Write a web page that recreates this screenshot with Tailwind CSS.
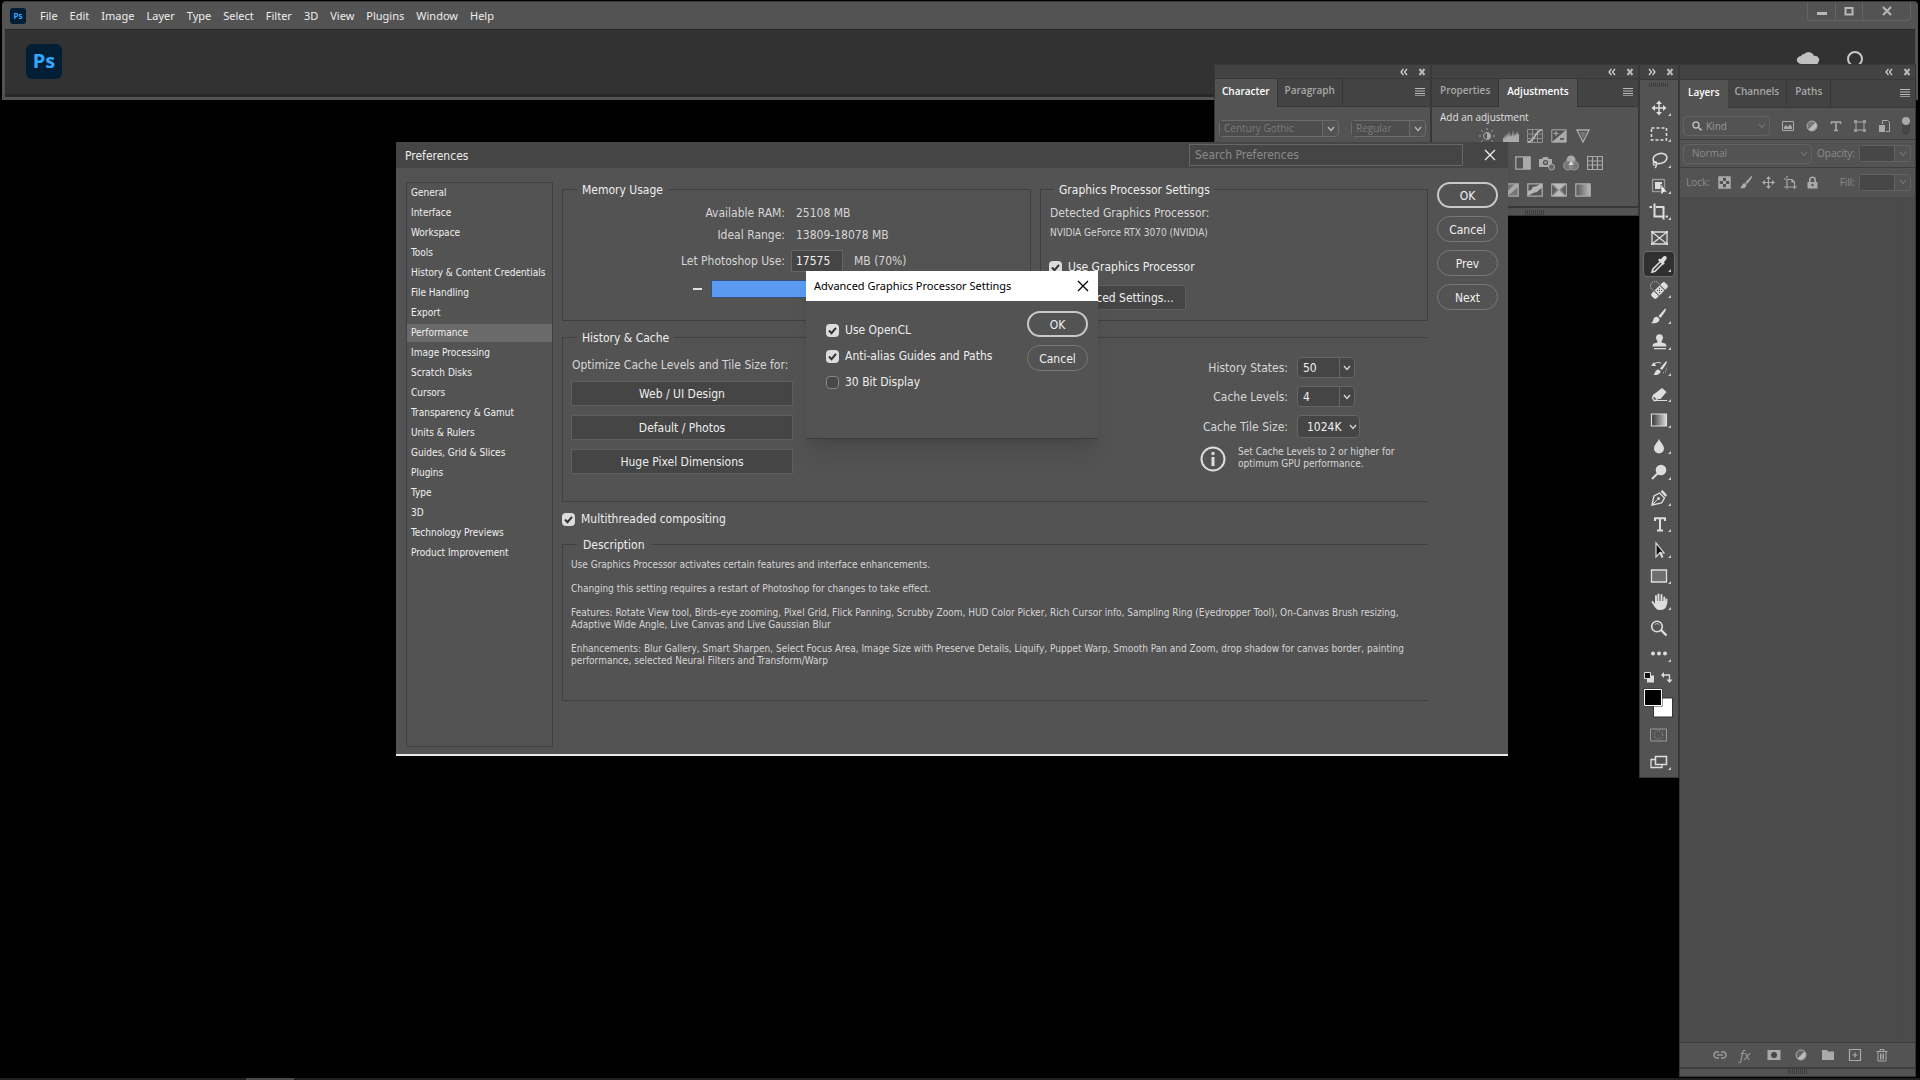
<!DOCTYPE html>
<html lang="en">
<head>
  <meta charset="UTF-8" />
  <meta name="viewport" content="width=device-width, initial-scale=1.0"/>
  <title>Photoshop - Preferences</title>
  <script src="https://cdn.jsdelivr.net/npm/@tailwindcss/browser@4"></script>
</head>

<body class="bg-black">
<div class="relative min-h-screen overflow-hidden bg-black font-['Open_Sans','Noto_Sans',sans-serif] text-[10px] text-[#dddddd]">

  <!-- Shared shapes -->
  <svg class="hidden">
    <symbol id="collapse" viewBox="0 0 8 8"><path d="M3.5 1 1 4l2.500 3M7 1 4.500 4 7 7" fill="none" stroke="#ccc" stroke-width="1.300"/></symbol>
    <symbol id="expand" viewBox="0 0 8 8"><path d="M1 1l2.500 3L1 7M4.500 1 7 4 4.500 7" fill="none" stroke="#ccc" stroke-width="1.300"/></symbol>
    <symbol id="close" viewBox="0 0 8 8"><path d="M1.500 1 6.500 7M6.500 1 1.500 7" fill="none" stroke="#b8b8b8" stroke-width="2"/></symbol>
    <symbol id="menu" viewBox="0 0 10 8"><path d="M0 .5h10M0 3h10M0 5.500h10M0 7.800h10" stroke="#bbb"/></symbol>
    <symbol id="caret" viewBox="0 0 8 6"><path d="M1 1l3 3.500L7 1" fill="none" stroke="currentColor" stroke-width="1.300"/></symbol>
    <symbol id="tick" viewBox="0 0 13 13"><path d="M3 6.500 5.500 9.200 10 3.800" fill="none" stroke="#333" stroke-width="2"/></symbol>
    <symbol id="x" viewBox="0 0 12 12"><path d="M1 1l10 10M11 1 1 11" fill="none" stroke="currentColor" stroke-width="1.300"/></symbol>
  </svg>

  <!-- Application window -->
  <header class="mx-[2px] mt-px rounded-t border-t border-[#3a3a3a] bg-[#535353] pb-[3px]">
    <div class="flex h-[27px] items-start justify-between">
      <nav class="flex h-7 items-center pl-2 font-['Noto_Sans','Open_Sans',sans-serif] text-[11px] text-[#eeeeee]">
        <div class="mr-[14px] flex size-4 items-center justify-center rounded-[3px] bg-[#001e36] text-[8px] font-bold text-[#31a8ff]">Ps</div>
        <div class="flex gap-3">
          <a href="#">File</a><a href="#">Edit</a><a href="#">Image</a><a href="#">Layer</a><a href="#">Type</a><a href="#">Select</a><a href="#">Filter</a><a href="#">3D</a><a href="#">View</a><a href="#">Plugins</a><a href="#">Window</a><a href="#">Help</a>
        </div>
      </nav>
      <div class="mr-[7px] flex h-[19px] rounded-b-sm border border-t-0 border-[#646464]">
        <button aria-label="Minimize" class="flex w-7 items-center justify-center border-r border-[#646464]"><svg class="size-3" viewBox="0 0 12 12"><path d="M1 7h10v3H1z" fill="#b8b8b8"/></svg></button>
        <button aria-label="Maximize" class="flex w-[27px] items-center justify-center border-r border-[#646464]"><svg class="size-3" viewBox="0 0 12 12"><path d="M2.500 3h7v6.500h-7z" fill="none" stroke="#b8b8b8" stroke-width="2"/></svg></button>
        <button aria-label="Close window" class="flex w-[47px] items-center justify-center"><svg class="size-3" viewBox="0 0 12 12"><path d="M2 2l8 8M10 2l-8 8" stroke="#b8b8b8" stroke-width="2"/></svg></button>
      </div>
    </div>
    <div class="mx-[3px] flex h-[68px] items-start justify-between border-t border-b-3 border-[#272727] bg-[#323232] pt-[14px] pl-[21px]">
      <div class="flex h-[35px] w-9 items-center justify-center rounded-[6px] bg-[#001e36] pb-[2px] text-[20px] font-bold text-[#31a8ff]">Ps</div>
      <div class="mr-[51px] flex gap-[26px] pt-[6px]">
        <svg class="h-4 w-6" viewBox="0 0 24 16"><path d="M5 14a4.500 4.500 0 0 1-4-3 4 4 0 0 1 4-5 4 4 0 0 1 3-2 6 6 0 0 1 10 2 4 4 0 0 1 4.500 6l-1 2z" fill="#c0c0c0"/></svg>
        <svg class="size-[18px]" viewBox="0 0 18 18"><circle cx="9" cy="9" r="7" fill="none" stroke="#c8c8c8" stroke-width="2"/></svg>
      </div>
    </div>
  </header>

  <!-- Character / Paragraph panel -->
  <section class="absolute top-[64px] right-[489px] h-[150px] w-[217px] border border-[#383838] bg-[#535353]">
    <div class="flex h-[14px] items-center justify-end gap-[10px] border-b border-[#383838] bg-[#434343] pr-1">
      <svg class="size-2"><use href="#collapse"/></svg><svg class="size-2"><use href="#close"/></svg>
    </div>
    <div class="flex h-7 items-stretch bg-[#434343] font-semibold">
      <button class="bg-[#535353] px-[7px] pb-1 text-white">Character</button>
      <button class="border-x border-b border-[#383838] px-[7px] pb-1 text-[#a8a8a8]">Paragraph</button>
      <div class="flex flex-1 items-center justify-end border-b border-[#383838] pr-[5px] pb-[2px]"><svg class="h-2 w-[10px]"><use href="#menu"/></svg></div>
    </div>
    <div class="flex gap-3 px-1 pt-[13px] text-[#7c7c7c]">
      <div class="flex h-[17px] w-[120px] rounded-sm border border-[#6b6b6b]">
        <input aria-label="Font family" value="Century Gothic" class="w-0 flex-1 bg-[#4d4d4d] pl-1 outline-none"/>
        <button aria-label="Font list" class="flex w-4 items-center justify-center border-l border-[#6b6b6b] text-[#b8b8b8]"><svg class="h-[6px] w-2"><use href="#caret"/></svg></button>
      </div>
      <div class="flex h-[17px] w-[75px] rounded-sm border border-[#6b6b6b]">
        <input aria-label="Font style" value="Regular" class="w-0 flex-1 bg-[#4d4d4d] pl-1 outline-none"/>
        <button aria-label="Style list" class="flex w-4 items-center justify-center border-l border-[#6b6b6b] text-[#b8b8b8]"><svg class="h-[6px] w-2"><use href="#caret"/></svg></button>
      </div>
    </div>
  </section>

  <!-- Properties / Adjustments panel -->
  <section class="absolute top-[64px] right-[281px] w-[208px] border border-[#383838] bg-[#535353]">
    <div class="flex h-[14px] items-center justify-end gap-[10px] border-b border-[#383838] bg-[#434343] pr-1">
      <svg class="size-2"><use href="#collapse"/></svg><svg class="size-2"><use href="#close"/></svg>
    </div>
    <div class="flex h-7 items-stretch bg-[#434343] font-semibold">
      <button class="border-r border-b border-[#383838] px-2 pb-1 text-[#a8a8a8]">Properties</button>
      <button class="border-r border-[#383838] bg-[#535353] px-2 pb-1 text-white">Adjustments</button>
      <div class="flex flex-1 items-center justify-end border-b border-[#383838] pr-[5px] pb-[2px]"><svg class="h-2 w-[10px]"><use href="#menu"/></svg></div>
    </div>
    <div class="px-2 pt-[3px]">
      <p class="leading-[14px] text-[#e0e0e0]">Add an adjustment</p>
      <div class="flex flex-col gap-[11px] pt-[4px]">
        <div class="flex gap-2 pl-[39px]">
          <svg class="size-4" viewBox="0 0 16 16"><circle cx="8" cy="8" r="3.500" fill="none" stroke="#aaa"/><path d="M8 4.500a3.500 3.500 0 0 1 0 7z" fill="#aaa"/><path d="M8 0v2M8 14v2M0 8h2M14 8h2M2.300 2.300l1.500 1.500M12.200 12.200l1.500 1.500M13.700 2.300l-1.500 1.500M2.300 13.700l1.500-1.500" stroke="#aaa"/></svg>
          <svg class="size-4" viewBox="0 0 16 16"><path d="M0 14V9l1 2 1-4 1 3 1-5 1 4 1-6 1 6 1-3 1 3 1-7 1 7 1-4 1 3 1-5 1 4 1-2v9z" fill="#aaa"/></svg>
          <svg class="size-4" viewBox="0 0 16 16"><path d="M.5 1.500h15v13H.5zM5.500 1v14M10.500 1v14M0 6h16M0 10.500h16" fill="none" stroke="#8e8e8e"/><path d="M1 14c7 0 7-12 14-12" fill="none" stroke="#bbb" stroke-width="1.500"/></svg>
          <svg class="size-4" viewBox="0 0 16 16"><path d="M.8 1.800h14.400v12.400H.8z" fill="none" stroke="#aaa"/><path d="M15 2v12H1z" fill="#aaa"/><path d="M5 3v5M2.500 5.500h5" stroke="#aaa"/><path d="M9 11h4" stroke="#444" stroke-width="1.500"/></svg>
          <svg class="size-4" viewBox="0 0 16 16"><path d="M2 2h12L8 14z" fill="none" stroke="#aaa" stroke-width="1.400"/><path d="M5 4h6l-3 7z" fill="#777"/></svg>
        </div>
        <div class="flex gap-2 pl-[75px]">
          <svg class="size-4" viewBox="0 0 16 16"><path d="M.8 1.800h14.400v12.400H.8z" fill="none" stroke="#aaa" stroke-width="1.300"/><path d="M8 2h7v12H8z" fill="#aaa"/></svg>
          <svg class="size-4" viewBox="0 0 16 16"><path d="M0 4h3l1.500-2h4L10 4h3v8H0z" fill="#aaa"/><circle cx="6.500" cy="7.500" r="2.600" fill="#535353"/><circle cx="6.500" cy="7.500" r="1.200" fill="#aaa"/><circle cx="12.500" cy="12" r="3" fill="#666" stroke="#aaa"/></svg>
          <svg class="size-4" viewBox="0 0 16 16"><circle cx="8" cy="5" r="4.500" fill="#aaa"/><circle cx="5" cy="10.500" r="4.500" fill="#777" stroke="#999"/><circle cx="11" cy="10.500" r="4.500" fill="#8c8c8c" fill-opacity=".7" stroke="#999"/><path d="M8 6l2.500 4h-5z" fill="#ddd"/></svg>
          <svg class="size-4" viewBox="0 0 16 16"><path d="M.5 1.500h15v13H.5zM5.500 1v14M10.500 1v14M0 6h16M0 10h16" fill="none" stroke="#aaa" stroke-width="1.200"/></svg>
        </div>
        <div class="flex gap-2 pl-[63px]">
          <svg class="size-4" viewBox="0 0 16 16"><path d="M.8 1.800h14.400v12.400H.8z" fill="#777" stroke="#aaa" stroke-width="1.300"/><path d="M2 11 12 2h3v3L5 14H2z" fill="#aaa"/></svg>
          <svg class="size-4" viewBox="0 0 16 16"><path d="M.8 1.800h14.400v12.400H.8z" fill="#555" stroke="#aaa" stroke-width="1.300"/><path d="M1 9l3-1 2-3 4-1 3-2h2v4l-3 2-2 2-4 1-3 2H1z" fill="#b5b5b5"/></svg>
          <svg class="size-4" viewBox="0 0 16 16"><path d="M.8 1.800h14.400v12.400H.8z" fill="#888" stroke="#aaa" stroke-width="1.300"/><path d="M2 2h12L8 8zM2 14h12L8 8z" fill="#bbb"/><path d="M1 3v10l5-5zM15 3v10l-5-5z" fill="#606060"/></svg>
          <svg class="size-4" viewBox="0 0 16 16"><defs><linearGradient id="g1"><stop stop-color="#555"/><stop offset="1" stop-color="#bbb"/></linearGradient></defs><path d="M.8 1.800h14.400v12.400H.8z" fill="url(#g1)" stroke="#aaa" stroke-width="1.300"/></svg>
        </div>
      </div>
    </div>
    <div class="mt-2 flex h-[9px] items-end justify-center border-t-2 border-[#383838]"><div class="h-[5px] w-5 bg-[repeating-linear-gradient(90deg,#3d3d3d_0_1px,transparent_1px_2px)]"></div></div>
  </section>

  <!-- Tools -->
  <aside class="absolute top-[64px] right-[241px] w-[40px] border border-[#383838] bg-[#535353] pb-[2px]">
    <div class="flex h-[15px] items-center justify-end gap-[10px] border-b border-[#383838] bg-[#434343] pr-1">
      <svg class="size-2"><use href="#expand"/></svg><svg class="size-2"><use href="#close"/></svg>
    </div>
    <div class="mx-auto mt-[3px] mb-2 h-1 w-5 bg-[repeating-linear-gradient(90deg,#3d3d3d_0_1px,transparent_1px_2px)]"></div>
    <div class="flex flex-col pl-[3px] text-[#dddddd]">
      <button aria-label="Move"><svg class="h-[26px] w-8" viewBox="0 0 32 26"><path d="M16 7v12M10 13h12" stroke="currentColor" stroke-width="1.500"/><path d="M16 5.500l3 3.500h-6zM16 20.500l3-3.500h-6zM8.500 13l3.500-3v6zM23.500 13l-3.500-3v6z" fill="currentColor"/><path d="M28 18v3h-3z" fill="#ccc"/></svg></button>
      <button aria-label="Marquee"><svg class="h-[26px] w-8" viewBox="0 0 32 26"><path d="M8.500 7h15v12h-15z" fill="none" stroke="currentColor" stroke-width="1.500" stroke-dasharray="3 2"/><path d="M28 18v3h-3z" fill="#ccc"/></svg></button>
      <button aria-label="Lasso"><svg class="h-[26px] w-8" viewBox="0 0 32 26"><ellipse cx="17" cy="11.500" rx="7" ry="5" transform="rotate(-15 17 11.500)" fill="none" stroke="currentColor" stroke-width="1.600"/><circle cx="12" cy="16.500" r="1.800" fill="none" stroke="currentColor" stroke-width="1.200"/><path d="M13 18c1 1 0 2-1 3" fill="none" stroke="currentColor" stroke-width="1.200"/><path d="M28 18v3h-3z" fill="#ccc"/></svg></button>
      <button aria-label="Object selection"><svg class="h-[26px] w-8" viewBox="0 0 32 26"><path d="M9.500 6.500h12v12h-12z" fill="none" stroke="currentColor" stroke-width="1.300" stroke-dasharray="1 1"/><path d="M12 9h7v7h-7z" fill="currentColor"/><path d="M18 11v11l3-3 3.500.5z" fill="#eee" stroke="#535353" stroke-width=".7"/><path d="M28 18v3h-3z" fill="#ccc"/></svg></button>
      <button aria-label="Crop"><svg class="h-[26px] w-8" viewBox="0 0 32 26"><path d="M11.500 4.500v13h8M6.500 8h2.500M13 8h7.500v12.500M22.500 17.500h2.500" fill="none" stroke="currentColor" stroke-width="2"/><path d="M28 18v3h-3z" fill="#ccc"/></svg></button>
      <button aria-label="Frame"><svg class="h-[26px] w-8" viewBox="0 0 32 26"><path d="M9 7h15v12H9zM9 7l15 12M24 7 9 19" fill="none" stroke="currentColor" stroke-width="1.300"/><path d="M8 6h2v2H8zM23 6h2v2h-2zM8 18h2v2H8zM23 18h2v2h-2z" fill="currentColor"/></svg></button>
      <button aria-label="Eyedropper" class="mr-[3px] rounded-sm border border-[#6b6b6b] bg-[#303030]"><svg class="h-6 w-[30px]" viewBox="1 1 30 24"><path d="M17.500 10.500 10 18l-1 3 3-.8 7.500-7.500" fill="none" stroke="currentColor" stroke-width="1.600"/><path d="M15 9l1.500-1.500 1.500.7 2-2.500c2.500-2 5 .3 3 3L21 11l.7 1.500L20 14z" fill="currentColor"/><path d="M28 18v3h-3z" fill="#ccc"/></svg></button>
      <button aria-label="Healing brush"><svg class="h-[26px] w-8" viewBox="0 0 32 26"><circle cx="12" cy="9" r="4.500" fill="none" stroke="currentColor" stroke-dasharray="1 1.200"/><g transform="rotate(-45 16.500 13.500)"><rect x="7" y="10" width="19" height="7" rx="2" fill="currentColor"/><path d="M12.500 9v9M20.500 9v9" stroke="#535353"/><path d="M14.500 12h1.200M17.500 12h1.200M14.500 15h1.200M17.500 15h1.200M16 13.500h1.200" stroke="#444"/></g><path d="M28 18v3h-3z" fill="#ccc"/></svg></button>
      <button aria-label="Brush"><svg class="h-[26px] w-8" viewBox="0 0 32 26"><path d="M22.500 5.500c1 .7.300 2-1 4l-4 5.500-2-2 4.500-5c1.200-1.500 2-2.700 2.500-2.500z" fill="currentColor"/><path d="M14.500 14l2 2c0 3-3 5-8.500 4 2-1 2-2.500 2.500-4 .7-1.800 2.300-2.500 4-2z" fill="currentColor"/><path d="M28 18v3h-3z" fill="#ccc"/></svg></button>
      <button aria-label="Clone stamp"><svg class="h-[26px] w-8" viewBox="0 0 32 26"><path d="M14.500 13.500c.5-2-1.500-2.500-1.500-4.700a3.500 3.500 0 0 1 7 0c0 2.200-2 2.700-1.500 4.700 3 .5 5 1 5 4H9.500c0-3 2-3.500 5-4zM11 19h12v1.300H11z" fill="currentColor"/><path d="M28 18v3h-3z" fill="#ccc"/></svg></button>
      <button aria-label="History brush"><svg class="h-[26px] w-8" viewBox="0 0 32 26"><path d="M23.500 6c1 .7 0 2-1 4L19 15l-2-1.500 4-5zM15.500 14.500l2 1.500c0 3-3 4.500-7 4 1.500-1 1.500-5.500 5-5.500z" fill="currentColor"/><path d="M8 11l3-4 2 4z" fill="currentColor"/><path d="M12 8.500c2-1.500 5-1.500 6 0" stroke="currentColor" fill="none"/><path d="M20 18l3-2 .5-4" fill="none" stroke="currentColor" stroke-dasharray="1 1.500"/><path d="M28 18v3h-3z" fill="#ccc"/></svg></button>
      <button aria-label="Eraser"><svg class="h-[26px] w-8" viewBox="0 0 32 26"><path d="M19 7l4.500 4-6 7h-3L10 14z" fill="currentColor"/><path d="M10.500 14.500l3.700 3.500-1.200 1.500h-2L9.500 17z" fill="#535353" stroke="currentColor" stroke-width="1.300"/><path d="M11 19.500h13" stroke="currentColor"/><path d="M28 18v3h-3z" fill="#ccc"/></svg></button>
      <button aria-label="Gradient"><svg class="h-[26px] w-8" viewBox="0 0 32 26"><defs><linearGradient id="g2"><stop stop-color="#333"/><stop offset="1" stop-color="#ddd"/></linearGradient></defs><path d="M8.500 7h15v12h-15z" fill="url(#g2)" stroke="currentColor" stroke-width="1.200"/><path d="M28 18v3h-3z" fill="#ccc"/></svg></button>
      <button aria-label="Blur"><svg class="h-[26px] w-8" viewBox="0 0 32 26"><path d="M16 5.500c1 4 5 6 5 10a5 5 0 0 1-10 0c0-4 4-6 5-10z" fill="currentColor"/><path d="M28 18v3h-3z" fill="#ccc"/></svg></button>
      <button aria-label="Dodge"><svg class="h-[26px] w-8" viewBox="0 0 32 26"><circle cx="18" cy="11" r="5.300" fill="currentColor"/><path d="M15 14l-6 6" stroke="currentColor" stroke-width="2"/><path d="M28 18v3h-3z" fill="#ccc"/></svg></button>
      <button aria-label="Pen"><svg class="h-[26px] w-8" viewBox="0 0 32 26"><path d="M9 20l2-9 5.500-3 5 5-3 5z" fill="none" stroke="currentColor" stroke-width="1.400"/><path d="M17.500 6.500l2-1.500 4.500 5-1.500 2z" fill="currentColor"/><path d="M9 20l5.500-5.500" stroke="currentColor"/><circle cx="15.500" cy="13.500" r="1.500" fill="currentColor"/><path d="M28 18v3h-3z" fill="#ccc"/></svg></button>
      <button aria-label="Type"><svg class="h-[26px] w-8" viewBox="0 0 32 26"><path d="M12 10V7.300h10V10M17 7v12.500M14 19.500h6" fill="none" stroke="currentColor" stroke-width="2"/><path d="M28 18v3h-3z" fill="#ccc"/></svg></button>
      <button aria-label="Path selection"><svg class="h-[26px] w-8" viewBox="0 0 32 26"><path d="M13 6v14l3.500-4H21z" fill="#111" stroke="currentColor" stroke-width="1.200"/><path d="M17 15l2.500 5.500" stroke="currentColor" stroke-width="2"/><path d="M28 18v3h-3z" fill="#ccc"/></svg></button>
      <button aria-label="Rectangle"><svg class="h-[26px] w-8" viewBox="0 0 32 26"><path d="M8.500 7h15v12h-15z" fill="#6e6e6e" stroke="currentColor" stroke-width="1.300"/><path d="M28 18v3h-3z" fill="#ccc"/></svg></button>
      <button aria-label="Hand"><svg class="h-[26px] w-8" viewBox="0 0 32 26"><path d="M13 13V7M15.500 12V5.500M18.500 12V6M21.300 14V8.500M23.300 14.500l.2-4M9.500 13l3 4" stroke="currentColor" stroke-width="1.900" stroke-linecap="round"/><path d="M12 12h10.500l1.500 1c0 5-2 8-6.500 8-4 0-5-2-7-5l1.500-.5z" fill="currentColor"/><path d="M28 18v3h-3z" fill="#ccc"/></svg></button>
      <button aria-label="Zoom"><svg class="h-[26px] w-8" viewBox="0 0 32 26"><circle cx="14" cy="11.500" r="5.300" fill="none" stroke="currentColor" stroke-width="1.600"/><path d="M12 9.500c1.500-1.300 3.500-1 4.500.5" fill="none" stroke="#bbb"/><path d="M18 15l5.500 5.500" stroke="currentColor" stroke-width="2.400"/></svg></button>
      <button aria-label="Edit toolbar"><svg class="h-[26px] w-8" viewBox="0 0 32 26"><circle cx="10" cy="12.500" r="2" fill="currentColor"/><circle cx="16" cy="12.500" r="2" fill="currentColor"/><circle cx="22" cy="12.500" r="2" fill="currentColor"/><path d="M28 18v3h-3z" fill="#ccc"/></svg></button>
      <svg class="h-[52px] w-8" viewBox="0 0 32 52"><path d="M4 8.500h7v7H4z" fill="#ddd"/><path d="M1.500 5.500h6v6h-6z" fill="#111" stroke="#ddd"/><path d="M19 8h7.500v6" fill="none" stroke="#ddd" stroke-width="1.300"/><path d="M21 5v6l-3-3zM23.500 12.500h6l-3 3.500z" fill="#ddd"/><path d="M10.500 31h19v19h-19z" fill="#fff" stroke="#333"/><path d="M.5 21.500h19v18H.5z" fill="#333"/><path d="M1.500 22.500h17v16h-17z" fill="#000" stroke="#fff"/></svg>
      <button aria-label="Quick mask"><svg class="h-[30px] w-8" viewBox="0 0 32 30"><path d="M7.500 10h16v12h-16z" fill="none" stroke="#999"/><circle cx="15.500" cy="16" r="4.200" fill="none" stroke="#999" stroke-dasharray="1 1.200"/></svg></button>
      <button aria-label="Screen mode"><svg class="h-[26px] w-8" viewBox="0 0 32 26"><path d="M8 10.500h11v8H8z" fill="none" stroke="currentColor" stroke-width="1.300"/><path d="M12.500 7.500h11v8h-11z" fill="#535353" stroke="currentColor" stroke-width="1.500"/><path d="M28 18v3h-3z" fill="#ccc"/></svg></button>
    </div>
  </aside>

  <!-- Layers panel -->
  <aside class="absolute top-[64px] right-[4px] bottom-[3px] flex w-[237px] flex-col border border-[#383838] bg-[#535353]">
    <div class="flex h-[15px] shrink-0 items-center justify-end gap-[10px] border-b border-[#383838] bg-[#434343] pr-1">
      <svg class="size-2"><use href="#collapse"/></svg><svg class="size-2"><use href="#close"/></svg>
    </div>
    <div class="flex h-7 shrink-0 items-stretch bg-[#434343] font-semibold">
      <button class="bg-[#535353] px-2 pb-1 text-white">Layers</button>
      <button class="border-r border-b border-[#383838] px-[7px] pb-1 text-[#a8a8a8]">Channels</button>
      <button class="border-r border-b border-[#383838] px-2 pb-1 text-[#a8a8a8]">Paths</button>
      <div class="flex flex-1 items-center justify-end border-b border-[#383838] pr-[5px] pb-[2px]"><svg class="h-2 w-[10px]"><use href="#menu"/></svg></div>
    </div>
    <div class="flex h-8 shrink-0 items-start border-b border-[#3e3e3e] pt-2 pl-[3px]">
      <div class="relative flex h-5 w-[87px] items-center rounded-sm border border-[#626262]">
        <svg class="absolute left-2 size-[10px]" viewBox="0 0 10 10"><circle cx="4" cy="4" r="3" fill="none" stroke="#bbb" stroke-width="1.400"/><path d="M6 6l3.500 3.500" stroke="#bbb" stroke-width="1.600"/></svg>
        <select aria-label="Filter type" class="h-full w-full appearance-none pl-[22px] text-[#999999]"><option>Kind</option></select>
        <svg class="absolute right-[3px] h-[6px] w-2 text-[#6e6e6e]"><use href="#caret"/></svg>
      </div>
      <div class="ml-3 flex h-5 items-center gap-3">
        <svg class="size-3" viewBox="0 0 12 12"><path d="M.5 1.500h11v9H.5z" fill="none" stroke="#aaa"/><path d="M2 9V7l2-2 1.500 2L8 4.500 10 7v2z" fill="#aaa"/></svg>
        <svg class="size-3" viewBox="0 0 12 12"><circle cx="6" cy="6" r="5" fill="#777" stroke="#aaa"/><path d="M9.500 2.500a5 5 0 0 1-7 7z" fill="#bbb"/></svg>
        <svg class="size-3" viewBox="0 0 12 12"><path d="M1.500 4V2h9v2M6 2v9M4 10.500h4" fill="none" stroke="#aaa" stroke-width="1.600"/></svg>
        <svg class="size-3" viewBox="0 0 12 12"><path d="M2 2h8v8H2z" fill="none" stroke="#aaa"/><path d="M0 0h3v3H0zM9 0h3v3H9zM0 9h3v3H0zM9 9h3v3H9z" fill="#999"/></svg>
        <svg class="size-3" viewBox="0 0 12 12"><path d="M4.500 4V.5h5l2 2v9H8" fill="none" stroke="#aaa"/><path d="M1 5h6v7H1z" fill="#aaa"/></svg>
        <svg class="h-[18px] w-2" viewBox="0 0 8 18"><rect width="8" height="18" rx="4" fill="#464646"/><circle cx="4" cy="4" r="4" fill="#aaa"/></svg>
      </div>
    </div>
    <div class="flex h-7 shrink-0 items-center border-b border-[#3e3e3e] pl-[3px] text-[#8c8c8c]">
      <div class="relative flex h-5 w-[129px] items-center rounded-sm border border-[#626262]">
        <select aria-label="Blend mode" class="h-full w-full appearance-none pl-2"><option>Normal</option></select>
        <svg class="absolute right-[3px] h-[6px] w-2 text-[#6e6e6e]"><use href="#caret"/></svg>
      </div>
      <label for="opacity" class="ml-auto">Opacity:</label>
      <div class="mr-1 ml-1 flex h-[17px] w-[52px] rounded-sm border border-[#626262]">
        <input id="opacity" class="w-0 flex-1 bg-[#474747]"/>
        <button aria-label="Opacity slider" class="flex w-4 items-center justify-center border-l border-[#626262] text-[#6e6e6e]"><svg class="h-[6px] w-2"><use href="#caret"/></svg></button>
      </div>
    </div>
    <div class="flex h-[30px] shrink-0 items-center border-b border-[#4a4a4a] pb-px pl-[6px] text-[#8c8c8c]">
      <span>Lock:</span>
      <div class="ml-[8px] flex items-center gap-[9px]">
        <svg class="size-[13px]" viewBox="0 0 13 13"><path d="M1 1h11v11H1z" fill="none" stroke="#aaa" stroke-width="1.500"/><path d="M1 1h4v4H1zM8 1h4v4H8zM5 5h3v3H5zM1 8h4v4H1zM8 8h4v4H8z" fill="#aaa"/></svg>
        <svg class="size-[13px]" viewBox="0 0 13 13"><path d="M12 0c1 1-3 6-5 8L5.500 6.500C8 4 11-.5 12 0zM5 7l1.500 1.500C6.500 12 3 13 0 12c2-1 2-5 5-5z" fill="#aaa"/></svg>
        <svg class="size-[13px]" viewBox="0 0 13 13"><path d="M6.500 1v11M1 6.500h11" stroke="#aaa" stroke-width="1.200"/><path d="M6.500 0 9 3H4zM6.500 13 9 10H4zM0 6.500 3 4v5zM13 6.500 10 4v5z" fill="#aaa"/></svg>
        <svg class="size-[13px]" viewBox="0 0 13 13"><path d="M3 0v2M0 3h2M3 3.500h5l2.500 2.500V11H3zM8 3.500V6h2.500M10.500 11v2M11 11h2M0 11h2M3 11v2" fill="none" stroke="#aaa" stroke-width="1.200"/></svg>
        <svg class="size-[13px]" viewBox="0 0 13 13"><path d="M1.500 6h10v6.500h-10z" fill="#aaa"/><path d="M3.800 6V4a2.700 2.700 0 0 1 5.400 0v2" fill="none" stroke="#aaa" stroke-width="1.600"/><circle cx="6.500" cy="9" r="1.200" fill="#555"/></svg>
      </div>
      <label for="fill" class="ml-auto">Fill:</label>
      <div class="mr-1 ml-1 flex h-[17px] w-[52px] rounded-sm border border-[#626262]">
        <input id="fill" class="w-0 flex-1 bg-[#474747]"/>
        <button aria-label="Fill slider" class="flex w-4 items-center justify-center border-l border-[#626262] text-[#6e6e6e]"><svg class="h-[6px] w-2"><use href="#caret"/></svg></button>
      </div>
    </div>
    <div class="flex-1 bg-[#4b4b4b] pr-[12px]"><div class="h-full border-r border-[#484848]"></div></div>
    <div class="flex h-[25px] shrink-0 items-center gap-[13px] border-t border-[#3e3e3e] pl-[33px]">
      <svg class="h-[14px] w-[14px]" viewBox="0 0 14 14"><path d="M6 10H4a3 3 0 0 1 0-6h2M8 4h2a3 3 0 0 1 0 6H8M4 7h6" fill="none" stroke="#999" stroke-width="1.400"/></svg>
      <span class="w-[14px] text-[13px] leading-[14px] text-[#a0a0a0] italic">fx</span>
      <svg class="h-[14px] w-[14px]" viewBox="0 0 14 14"><path d="M.5 2h13v10H.5z" fill="#aaa"/><circle cx="7" cy="7" r="3" fill="#484848"/></svg>
      <svg class="h-[14px] w-[14px]" viewBox="0 0 14 14"><circle cx="7" cy="7" r="5" fill="#666" stroke="#aaa"/><path d="M10.500 3.500a5 5 0 0 1-7 7z" fill="#bbb"/></svg>
      <svg class="h-[14px] w-[14px]" viewBox="0 0 14 14"><path d="M1 2h5l1 1.500h6V12H1z" fill="#aaa"/></svg>
      <svg class="h-[14px] w-[14px]" viewBox="0 0 14 14"><path d="M1.500 1.500h11v11h-11zM7 4.500v5M4.500 7h5" fill="none" stroke="#aaa" stroke-width="1.200"/></svg>
      <svg class="h-[14px] w-[14px]" viewBox="0 0 14 14"><path d="M1.500 3.500h11M5 3V1.500h4V3M3 4v9h8V4M5.500 5.500v6M7 5.500v6M8.500 5.500v6" fill="none" stroke="#aaa"/></svg>
    </div>
    <div class="flex h-[9px] shrink-0 items-start justify-center border-t-2 border-[#3e3e3e]"><div class="h-[5px] w-5 bg-[repeating-linear-gradient(90deg,#3d3d3d_0_1px,transparent_1px_2px)]"></div></div>
  </aside>

  <!-- Taskbar edge -->
  <div class="absolute inset-x-0 bottom-0 flex h-[2px] bg-[#1f1f1f] pl-[246px]"><div class="w-12 bg-[#4a4a4a]"></div></div>

  <!-- Preferences dialog -->
  <div role="dialog" aria-label="Preferences" class="absolute top-[142px] left-[396px] flex h-[614px] w-[1112px] flex-col border-b-2 border-[#e8e8e8] bg-[#535353] font-['DejaVu_Sans_Condensed','DejaVu_Sans',sans-serif] text-[12px] text-[#d6d6d6] shadow-lg">
    <div class="flex h-[26px] shrink-0 items-center bg-[#454545] pr-3 pl-[9px]">
      <h1 class="flex-1 pt-px text-[#eeeeee]">Preferences</h1>
      <input aria-label="Search Preferences" placeholder="Search Preferences" class="mr-[21px] h-[22px] w-[274px] border border-[#666666] bg-[#454545] pl-[5px] placeholder:text-[#8a8a8a]"/>
      <button aria-label="Close" class="text-[#eeeeee]"><svg class="size-3"><use href="#x"/></svg></button>
    </div>
    <div class="flex flex-1 gap-[9px] pt-[13px] pr-[10px] pb-[7px] pl-[10px]">
      <nav class="mt-px flex w-[147px] flex-col gap-[2px] border border-[#404040] pt-px text-[10px] leading-[18px] text-[#f0f0f0]">
        <a href="#" class="pl-1">General</a>
        <a href="#" class="pl-1">Interface</a>
        <a href="#" class="pl-1">Workspace</a>
        <a href="#" class="pl-1">Tools</a>
        <a href="#" class="pl-1">History &amp; Content Credentials</a>
        <a href="#" class="pl-1">File Handling</a>
        <a href="#" class="pl-1">Export</a>
        <a href="#" class="bg-[#6a6a6a] pl-1">Performance</a>
        <a href="#" class="pl-1">Image Processing</a>
        <a href="#" class="pl-1">Scratch Disks</a>
        <a href="#" class="pl-1">Cursors</a>
        <a href="#" class="pl-1">Transparency &amp; Gamut</a>
        <a href="#" class="pl-1">Units &amp; Rulers</a>
        <a href="#" class="pl-1">Guides, Grid &amp; Slices</a>
        <a href="#" class="pl-1">Plugins</a>
        <a href="#" class="pl-1">Type</a>
        <a href="#" class="pl-1">3D</a>
        <a href="#" class="pl-1">Technology Previews</a>
        <a href="#" class="pl-1">Product Improvement</a>
      </nav>

      <div class="flex flex-1 flex-col gap-2">
        <div class="flex gap-[9px]">
          <fieldset class="h-[140px] w-[469px] border border-[#404040]">
            <legend class="ml-[14px] px-[5px] pt-px leading-4 text-[#eeeeee]">Memory Usage</legend>
            <div class="flex flex-col pt-1">
              <div class="flex h-[22px] items-center gap-[11px]"><span class="w-[222px] text-right">Available RAM:</span><span>25108 MB</span></div>
              <div class="flex h-[22px] items-center gap-[11px]"><span class="w-[222px] text-right">Ideal Range:</span><span>13809-18078 MB</span></div>
              <div class="mt-1 flex h-[22px] items-center">
                <label for="mem" class="w-[222px] text-right">Let Photoshop Use:</label>
                <input id="mem" value="17575" class="mr-[11px] ml-[6px] h-[22px] w-[52px] border border-[#666666] bg-[#454545] pl-1 text-[#f0f0f0]"/>
                <span>MB (70%)</span>
              </div>
              <div class="mt-2 flex items-center gap-[9px] pl-[130px]">
                <span class="h-[2px] w-[9px] bg-[#e0e0e0]"></span>
                <input type="range" aria-label="Memory" value="70" class="h-[18px] w-[260px] appearance-none border border-[#34507c] bg-[#5a9af0]"/>
              </div>
            </div>
          </fieldset>
          <fieldset class="h-[140px] flex-1 border border-[#404040]">
            <legend class="ml-[13px] px-[5px] pt-px leading-4 text-[#eeeeee]">Graphics Processor Settings</legend>
            <div class="flex flex-col items-start pt-1 pl-[9px]">
              <span class="leading-[22px]">Detected Graphics Processor:</span>
              <span class="text-[10px] leading-[18px]">NVIDIA GeForce RTX 3070 (NVIDIA)</span>
              <label class="mt-4 -ml-px flex h-[18px] items-center gap-[6px] text-[#eeeeee]">
                <span class="grid"><input type="checkbox" checked class="col-start-1 row-start-1 size-[13px] appearance-none rounded-sm bg-[#dcdcdc]"/><svg class="col-start-1 row-start-1 size-[13px]"><use href="#tick"/></svg></span>
                Use Graphics Processor
              </label>
              <button class="mt-[9px] h-[25px] w-[136px] border border-[#5e5e5e] bg-[#454545] text-[#eeeeee]">Advanced Settings...</button>
            </div>
          </fieldset>
        </div>

        <fieldset class="h-[173px] border border-r-0 border-[#404040]">
          <legend class="ml-[14px] px-[5px] pt-px leading-4 text-[#eeeeee]">History &amp; Cache</legend>
          <div class="flex justify-between pl-[8px]">
            <div class="flex w-[222px] flex-col gap-[9px] pt-[10px] text-[#eeeeee]">
              <p class="pl-px leading-[18px] whitespace-nowrap text-[#d6d6d6]">Optimize Cache Levels and Tile Size for:</p>
              <button class="-mt-[2px] h-[25px] border border-[#5e5e5e] bg-[#454545]">Web / UI Design</button>
              <button class="h-[25px] border border-[#5e5e5e] bg-[#454545]">Default / Photos</button>
              <button class="h-[25px] border border-[#5e5e5e] bg-[#454545]">Huge Pixel Dimensions</button>
            </div>
            <div class="flex w-[228px] flex-col gap-2 pt-[11px]">
              <div class="flex items-center gap-[9px]">
                <label for="states" class="w-[88px] text-right">History States:</label>
                <div class="flex h-[21px] w-[58px] rounded-sm border border-[#666666] bg-[#454545]">
                  <input id="states" value="50" class="w-0 flex-1 pl-[5px] text-[#f0f0f0]"/>
                  <button aria-label="States list" class="flex w-[15px] items-center justify-center border-l border-[#666666]"><svg class="h-[6px] w-2"><use href="#caret"/></svg></button>
                </div>
              </div>
              <div class="flex items-center gap-[9px]">
                <label for="levels" class="w-[88px] text-right">Cache Levels:</label>
                <div class="flex h-[21px] w-[58px] rounded-sm border border-[#666666] bg-[#454545]">
                  <input id="levels" value="4" class="w-0 flex-1 pl-[5px] text-[#f0f0f0]"/>
                  <button aria-label="Levels list" class="flex w-[15px] items-center justify-center border-l border-[#666666]"><svg class="h-[6px] w-2"><use href="#caret"/></svg></button>
                </div>
              </div>
              <div class="flex items-center gap-[9px]">
                <label for="tile" class="w-[88px] text-right whitespace-nowrap">Cache Tile Size:</label>
                <div class="relative flex items-center">
                  <select id="tile" class="h-[23px] w-[63px] appearance-none rounded-sm border border-[#666666] bg-[#454545] pl-[9px] text-[#f0f0f0]"><option>1024K</option></select>
                  <svg class="absolute right-[3px] h-[6px] w-2"><use href="#caret"/></svg>
                </div>
              </div>
              <div class="flex items-start gap-3">
                <svg class="size-[26px]" viewBox="0 0 26 26"><circle cx="13" cy="13" r="11.500" fill="none" stroke="#ddd" stroke-width="2"/><circle cx="13" cy="7.500" r="1.700" fill="#ddd"/><path d="M13 11v9" stroke="#ddd" stroke-width="3"/></svg>
                <p class="text-[10px] leading-3">Set Cache Levels to 2 or higher for<br/>optimum GPU performance.</p>
              </div>
            </div>
          </div>
        </fieldset>

        <label class="flex h-[18px] items-center gap-[6px] text-[#eeeeee]">
          <span class="grid"><input type="checkbox" checked class="col-start-1 row-start-1 size-[13px] appearance-none rounded-sm bg-[#dcdcdc]"/><svg class="col-start-1 row-start-1 size-[13px]"><use href="#tick"/></svg></span>
          Multithreaded compositing
        </label>

        <fieldset class="h-[165px] border border-r-0 border-[#404040]">
          <legend class="ml-[14px] px-[6px] pt-px leading-4 text-[#eeeeee]">Description</legend>
          <div class="flex flex-col gap-3 pt-[6px] pl-2 text-[10px] leading-3">
            <p>Use Graphics Processor activates certain features and interface enhancements.</p>
            <p>Changing this setting requires a restart of Photoshop for changes to take effect.</p>
            <p>Features: Rotate View tool, Birds-eye zooming, Pixel Grid, Flick Panning, Scrubby Zoom, HUD Color Picker, Rich Cursor info, Sampling Ring (Eyedropper Tool), On-Canvas Brush resizing,<br/>Adaptive Wide Angle, Live Canvas and Live Gaussian Blur</p>
            <p>Enhancements: Blur Gallery, Smart Sharpen, Select Focus Area, Image Size with Preserve Details, Liquify, Puppet Warp, Smooth Pan and Zoom, drop shadow for canvas border, painting<br/>performance, selected Neural Filters and Transform/Warp</p>
          </div>
        </fieldset>
      </div>

      <div class="mt-px flex w-[61px] flex-col gap-2 text-[#f0f0f0]">
        <button class="h-[26px] rounded-full border-2 border-[#c8c8c8] pt-px">OK</button>
        <button class="h-[26px] rounded-full border border-[#777777] pt-px">Cancel</button>
        <button class="h-[26px] rounded-full border border-[#777777] pt-px">Prev</button>
        <button class="h-[26px] rounded-full border border-[#777777] pt-px">Next</button>
      </div>
    </div>
  </div>

  <!-- Advanced settings dialog -->
  <div role="dialog" aria-label="Advanced Graphics Processor Settings" class="absolute top-[271px] left-[806px] h-[168px] w-[292px] border-b border-[#3a3a3a] bg-[#535353] font-['DejaVu_Sans_Condensed','DejaVu_Sans',sans-serif] text-[12px] text-[#eeeeee] shadow-xl">
    <div class="flex h-[30px] items-center justify-between bg-white pr-[9px] pl-2 font-['Noto_Sans','Open_Sans',sans-serif] text-[11px] text-black">
      <h2>Advanced Graphics Processor Settings</h2>
      <button aria-label="Close"><svg class="size-3"><use href="#x"/></svg></button>
    </div>
    <div class="flex justify-between pt-[10px] pr-[10px] pl-5">
      <div class="flex flex-col gap-2 pt-[10px]">
        <label class="flex h-[18px] items-center gap-[6px]"><span class="grid"><input type="checkbox" checked class="col-start-1 row-start-1 size-[13px] appearance-none rounded-sm bg-[#dcdcdc]"/><svg class="col-start-1 row-start-1 size-[13px]"><use href="#tick"/></svg></span>Use OpenCL</label>
        <label class="flex h-[18px] items-center gap-[6px]"><span class="grid"><input type="checkbox" checked class="col-start-1 row-start-1 size-[13px] appearance-none rounded-sm bg-[#dcdcdc]"/><svg class="col-start-1 row-start-1 size-[13px]"><use href="#tick"/></svg></span>Anti-alias Guides and Paths</label>
        <label class="flex h-[18px] items-center gap-[6px]"><input type="checkbox" class="size-[13px] appearance-none rounded-sm border border-[#888888] bg-[#484848]"/>30 Bit Display</label>
      </div>
      <div class="flex w-[61px] flex-col gap-2 text-[#f0f0f0]">
        <button class="h-[26px] rounded-full border-2 border-[#c8c8c8] pt-px">OK</button>
        <button class="h-[26px] rounded-full border border-[#777777] pt-px">Cancel</button>
      </div>
    </div>
  </div>

</div>
</body>
</html>
